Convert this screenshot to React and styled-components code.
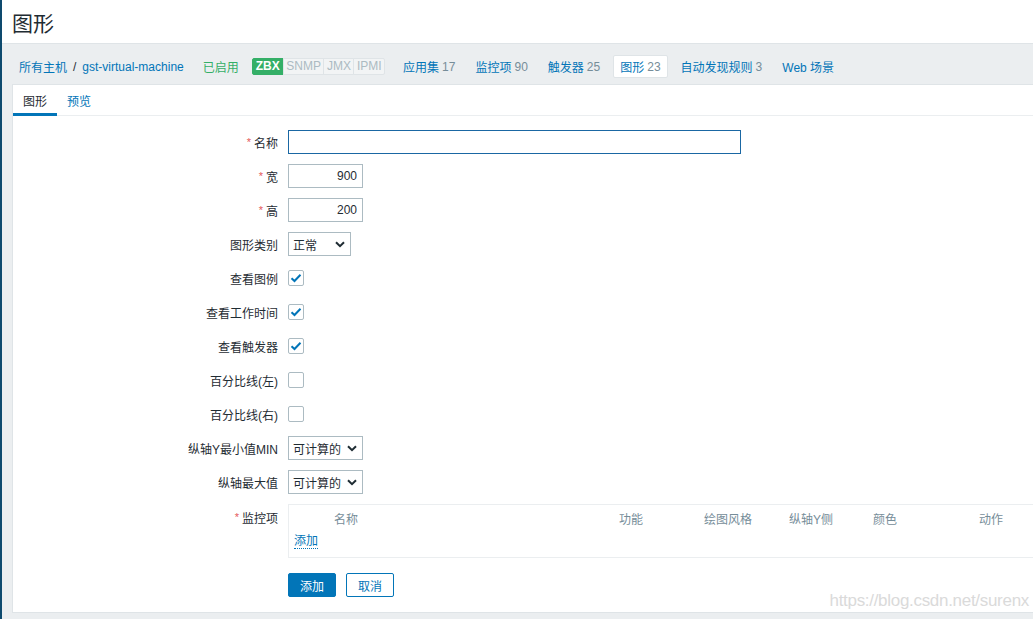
import React from 'react';
import styled, { createGlobalStyle } from 'styled-components';

const GlobalStyle = createGlobalStyle`
  html, body {
    margin: 0;
    padding: 0;
    height: 100%;
    overflow: hidden;
  }
  body {
    background: #ebeef0;
    font-family: "Liberation Sans", Arial, "Noto Sans CJK SC", sans-serif;
    font-size: 12px;
    color: #1f2c33;
  }
  * { box-sizing: border-box; }
`;

const Shell = styled.div`
  display: flex;
  min-height: 619px;
  position: relative;
`;

const SideStrip = styled.div`
  width: 2px;
  flex-shrink: 0;
  background: #0e4a6e;
`;

const Main = styled.div`
  flex: 1;
  display: flex;
  flex-direction: column;
  min-width: 0;
`;

const Header = styled.header`
  height: 44px;
  background: #fff;
  border-bottom: 1px solid #dfe4e7;
  display: flex;
  align-items: center;
  padding-left: 10px;

  h1 {
    margin: 0;
    font-size: 21px;
    font-weight: normal;
    color: #1f2c33;
  }
`;

const Nav = styled.nav`
  height: 40px;
  display: flex;
  align-items: center;
  padding: 5px 0 0 10px;
  gap: 6px;
`;

const NavItem = styled.div`
  display: flex;
  align-items: center;
  height: 23px;
  padding: 0 6px;
  white-space: nowrap;
  color: #0275b8;
  background: ${p => (p.$selected ? '#fff' : 'transparent')};
  border: 1px solid ${p => (p.$selected ? '#dfe4e7' : 'transparent')};
  border-radius: 2px;
`;

const Count = styled.span`
  color: #768d99;
  margin-left: 3px;
`;

const Separator = styled.span`
  color: #1f2c33;
  margin: 0 6px;
`;

const Enabled = styled(NavItem)`
  color: #34af67;
  margin-left: -1px;
`;

const Badges = styled.div`
  display: flex;
  margin-right: 5px;
`;

const Badge = styled.span`
  height: 17px;
  line-height: 15px;
  padding: 0 2.5px;
  font-size: 12px;
  border: 1px solid ${p => (p.$on ? '#34af67' : '#dfe4e7')};
  background: ${p => (p.$on ? '#34af67' : '#f2f4f5')};
  color: ${p => (p.$on ? '#fff' : '#acbbc2')};
  font-weight: ${p => (p.$on ? 'bold' : 'normal')};
  margin-left: -1px;
  &:first-child { border-radius: 2px 0 0 2px; margin-left: 0; padding: 0 3px; }
  &:last-child { border-radius: 0 2px 2px 0; }
`;

const Panel = styled.section`
  margin-left: 10px;
  height: 529px;
  background: #fff;
  border: 1px solid #dfe4e7;
  border-right: none;
  display: flex;
  flex-direction: column;
`;

const Tabs = styled.div`
  display: flex;
  height: 31px;
  border-bottom: 1px solid #ebeef0;
`;

const Tab = styled.div`
  padding: 3px 10px 0;
  display: flex;
  align-items: center;
  color: ${p => (p.$active ? '#1f2c33' : '#0275b8')};
  border-bottom: 3px solid ${p => (p.$active ? '#0275b8' : 'transparent')};
  margin-bottom: -1px;
`;

const Form = styled.div`
  display: flex;
  flex-direction: column;
  gap: 10px;
  padding-top: 14px;
`;

const Row = styled.div`
  display: flex;
  align-items: ${p => (p.$top ? 'flex-start' : 'center')};
  min-height: 24px;
`;

const Label = styled.label`
  width: 275px;
  flex-shrink: 0;
  text-align: right;
  padding-right: 10px;
  white-space: nowrap;
  padding-top: ${p => (p.$top ? '5px' : '0')};
`;

const Asterisk = styled.span`
  color: #e45959;
  font-size: 11px;
  vertical-align: 2px;
  margin-right: 3px;
`;

const TextInput = styled.input`
  height: 24px;
  width: ${p => p.$w}px;
  border: 1px solid ${p => (p.$focus ? '#1a67a3' : '#acbbc2')};
  outline: none;
  padding: 0 5px;
  font: inherit;
  color: #1f2c33;
  text-align: ${p => (p.$right ? 'right' : 'left')};
  background: #fff;
`;

const SelectBox = styled.div`
  height: 24px;
  width: ${p => p.$w}px;
  border: 1px solid #acbbc2;
  display: flex;
  align-items: center;
  justify-content: space-between;
  padding: 0 5px 0 4px;
  color: #1f2c33;
`;

const Checkbox = styled.div`
  width: 16px;
  height: 16px;
  border: 1px solid #acbbc2;
  border-radius: 2px;
  display: flex;
  align-items: center;
  justify-content: center;
`;

const ItemsBox = styled.div`
  flex: 1;
  height: 54px;
  border: 1px solid #ebeef0;
  border-right: none;
  padding: 5px 0 0 0;
`;

const HeadRow = styled.div`
  display: grid;
  grid-template-columns: 45px 285px 85px 85px 84px 106px 1fr;
  color: #768d99;
  height: 16px;
  align-items: center;
`;

const AddLink = styled.a`
  display: inline-block;
  margin: 8px 0 0 5px;
  color: #0275b8;
  text-decoration: none;
  border-bottom: 1px dotted #0275b8;
  line-height: 14px;
`;

const Buttons = styled.div`
  display: flex;
  gap: 10px;
  margin-left: 275px;
  margin-top: 5px;
`;

const Button = styled.button`
  height: 24px;
  width: 48px;
  border-radius: 2px;
  font: inherit;
  cursor: pointer;
  border: 1px solid #0275b8;
  background: ${p => (p.$primary ? '#0275b8' : '#fff')};
  color: ${p => (p.$primary ? '#fff' : '#0275b8')};
`;

const Watermark = styled.div`
  position: absolute;
  right: 4px;
  bottom: 8px;
  font-size: 17px;
  color: #dadada;
  letter-spacing: -0.3px;
  font-family: "Liberation Sans", Arial, sans-serif;
`;

const Check = () => (
  <svg width="12" height="10" viewBox="0 0 12 10">
    <path d="M1.5 5.2 L4.5 8 L10.5 1.8" fill="none" stroke="#0275b8" strokeWidth="2" />
  </svg>
);

const Chevron = () => (
  <svg width="10" height="7" viewBox="0 0 10 7">
    <path d="M1 1.2 L5 5.2 L9 1.2" fill="none" stroke="#1f2c33" strokeWidth="2" />
  </svg>
);

const Field = ({ label, required, top, children }) => (
  <Row $top={top}>
    <Label $top={top}>
      {required && <Asterisk>*</Asterisk>}
      {label}
    </Label>
    {children}
  </Row>
);

const navItems = [
  ['应用集', '17'],
  ['监控项', '90'],
  ['触发器', '25'],
  ['图形', '23', true],
  ['自动发现规则', '3'],
  ['Web 场景', null],
];

export default function App() {
  return (
    <Shell>
      <GlobalStyle />
      <SideStrip />
      <Main>
        <Header>
          <h1>图形</h1>
        </Header>
        <Nav>
          <NavItem>
            所有主机<Separator>/</Separator>gst-virtual-machine
          </NavItem>
          <Enabled>已启用</Enabled>
          <Badges>
            <Badge $on>ZBX</Badge>
            <Badge>SNMP</Badge>
            <Badge>JMX</Badge>
            <Badge>IPMI</Badge>
          </Badges>
          {navItems.map(([name, count, sel]) => (
            <NavItem key={name} $selected={sel}>
              {name}
              {count && <Count>{count}</Count>}
            </NavItem>
          ))}
        </Nav>
        <Panel>
          <Tabs>
            <Tab $active>图形</Tab>
            <Tab>预览</Tab>
          </Tabs>
          <Form>
            <Field label="名称" required>
              <TextInput $w={453} $focus defaultValue="" />
            </Field>
            <Field label="宽" required>
              <TextInput $w={75} $right defaultValue="900" />
            </Field>
            <Field label="高" required>
              <TextInput $w={75} $right defaultValue="200" />
            </Field>
            <Field label="图形类别">
              <SelectBox $w={63}>正常<Chevron /></SelectBox>
            </Field>
            <Field label="查看图例">
              <Checkbox><Check /></Checkbox>
            </Field>
            <Field label="查看工作时间">
              <Checkbox><Check /></Checkbox>
            </Field>
            <Field label="查看触发器">
              <Checkbox><Check /></Checkbox>
            </Field>
            <Field label="百分比线(左)">
              <Checkbox />
            </Field>
            <Field label="百分比线(右)">
              <Checkbox />
            </Field>
            <Field label="纵轴Y最小值MIN">
              <SelectBox $w={75}>可计算的<Chevron /></SelectBox>
            </Field>
            <Field label="纵轴最大值">
              <SelectBox $w={75}>可计算的<Chevron /></SelectBox>
            </Field>
            <Field label="监控项" required top>
              <ItemsBox>
                <HeadRow>
                  <div />
                  <div>名称</div>
                  <div>功能</div>
                  <div>绘图风格</div>
                  <div>纵轴Y侧</div>
                  <div>颜色</div>
                  <div>动作</div>
                </HeadRow>
                <AddLink href="#">添加</AddLink>
              </ItemsBox>
            </Field>
            <Buttons>
              <Button $primary>添加</Button>
              <Button>取消</Button>
            </Buttons>
          </Form>
        </Panel>
      </Main>
      <Watermark>https://blog.csdn.net/surenx</Watermark>
    </Shell>
  );
}
